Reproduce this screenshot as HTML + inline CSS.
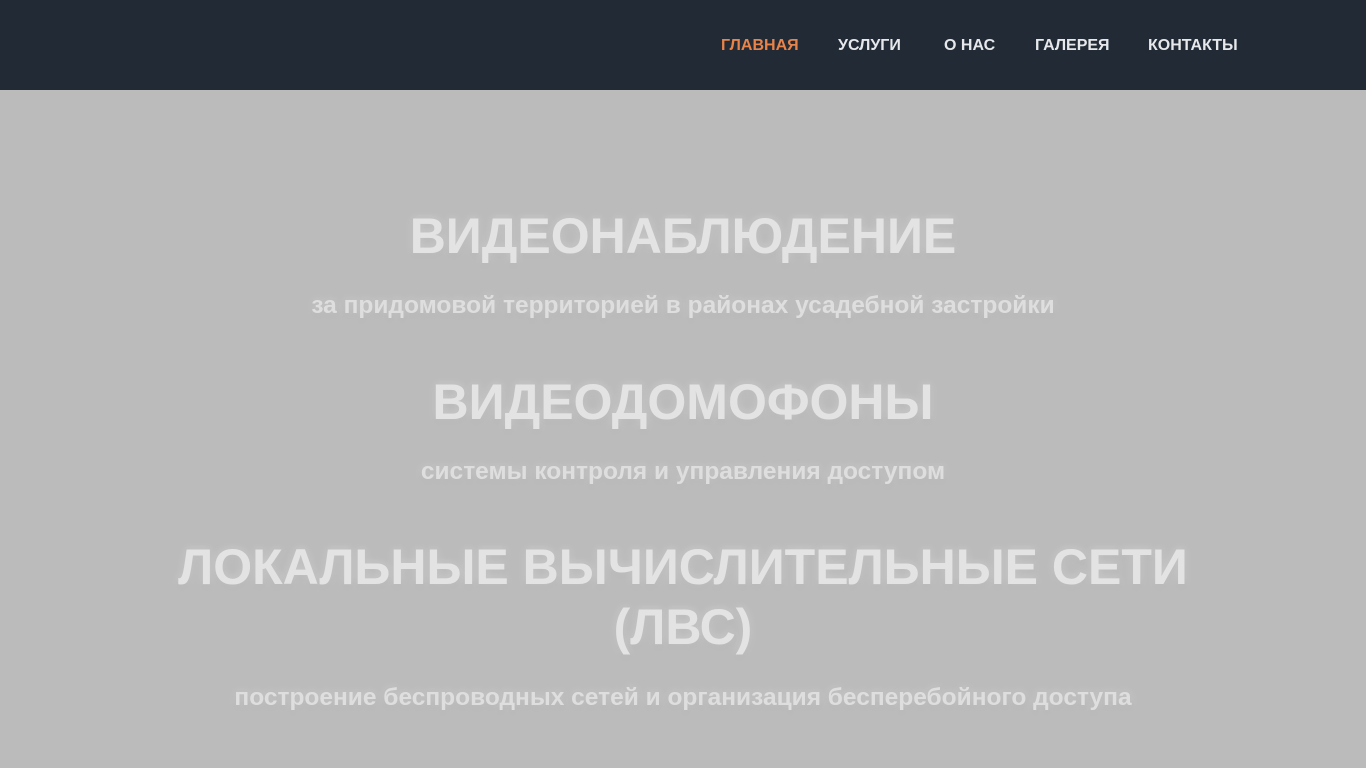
<!DOCTYPE html>
<html><head><meta charset="utf-8"><style>
*{margin:0;padding:0;box-sizing:border-box}
body{width:1366px;height:768px;overflow:hidden;background:#bbbbbb;font-family:"Liberation Sans",Arial,sans-serif}
.hdr{position:absolute;left:0;top:0;width:1366px;height:90px;background:#222b35}
.nav{position:absolute;top:37px;font-size:16px;font-weight:bold;color:#e6e8eb;white-space:nowrap;line-height:18px}
.t{position:absolute;left:0;width:1366px;text-align:center;font-weight:bold;color:#e3e3e3;text-shadow:0 0 8px rgba(255,255,255,0.35),0 2px 6px rgba(0,0,0,0.08)}
.h{font-size:50px;line-height:60px}
.s{font-size:24.5px;line-height:30px;color:#dedede}
</style></head><body>
<div class="hdr">
<span class="nav" style="left:721px;color:#e8834a">ГЛАВНАЯ</span>
<span class="nav" style="left:838px">УСЛУГИ</span>
<span class="nav" style="left:944px">О НАС</span>
<span class="nav" style="left:1035px">ГАЛЕРЕЯ</span>
<span class="nav" style="left:1148px">КОНТАКТЫ</span>
</div>
<div class="t h" style="top:206px">ВИДЕОНАБЛЮДЕНИЕ</div>
<div class="t s" style="top:291px">за придомовой территорией в районах усадебной застройки</div>
<div class="t h" style="top:372px">ВИДЕОДОМОФОНЫ</div>
<div class="t s" style="top:457px">системы контроля и управления доступом</div>
<div class="t h" style="top:537px">ЛОКАЛЬНЫЕ ВЫЧИСЛИТЕЛЬНЫЕ СЕТИ<br>(ЛВС)</div>
<div class="t s" style="top:683px">построение беспроводных сетей и организация бесперебойного доступа</div>
</body></html>
